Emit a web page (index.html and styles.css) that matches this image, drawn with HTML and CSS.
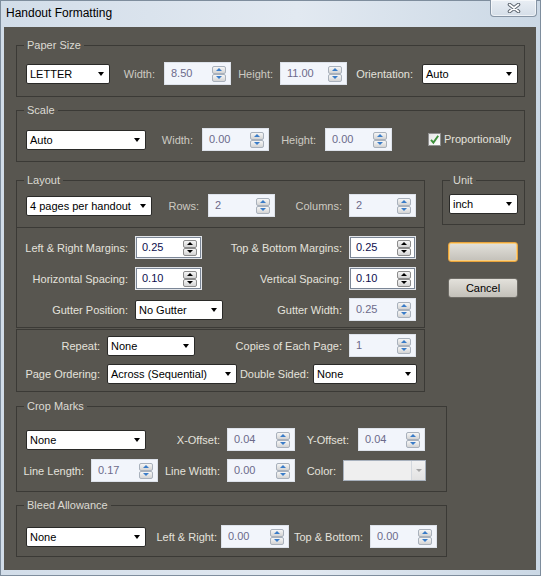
FILE: index.html
```html
<!DOCTYPE html>
<html lang="en">
<head>
  <meta charset="UTF-8">
  <title>Handout Formatting</title>
  <link rel="stylesheet" href="styles.css">
</head>
<body>

<div class="window">
  <div class="titlebar">
    <span class="title">Handout Formatting</span>
    <button class="close-btn">
      <svg width="14" height="10" viewBox="0 0 14 10">
        <path d="M2.5 1.5 L11.5 8.5 M11.5 1.5 L2.5 8.5" stroke="#5d6670" stroke-width="3.6" stroke-linecap="round" fill="none"/>
        <path d="M2.5 1.5 L11.5 8.5 M11.5 1.5 L2.5 8.5" stroke="#fff" stroke-width="1.6" stroke-linecap="round" fill="none"/>
      </svg>
    </button>
  </div>

  <div class="client">

    <!-- Paper size -->
    <div class="group paper">
      <span class="legend">Paper Size</span>
      <div class="row paper-row">
        <div class="select"><span>LETTER</span><i class="caret"></i></div>
        <span class="lbl dim wide">Width:</span>
        <div class="spin off"><span>8.50</span><span class="arrows"><i class="up"></i><i class="down"></i></span></div>
        <span class="lbl dim">Height:</span>
        <div class="spin off"><span>11.00</span><span class="arrows"><i class="up"></i><i class="down"></i></span></div>
        <span class="lbl wide">Orientation:</span>
        <div class="select"><span>Auto</span><i class="caret"></i></div>
      </div>
    </div>

    <!-- Scale -->
    <div class="group scale">
      <span class="legend">Scale</span>
      <div class="row scale-row">
        <div class="select"><span>Auto</span><i class="caret"></i></div>
        <span class="lbl dim wide">Width:</span>
        <div class="spin off"><span>0.00</span><span class="arrows"><i class="up"></i><i class="down"></i></span></div>
        <span class="lbl dim wide">Height:</span>
        <div class="spin off"><span>0.00</span><span class="arrows"><i class="up"></i><i class="down"></i></span></div>
        <span></span>
        <label class="check">
          <svg width="13" height="13" viewBox="0 0 13 13">
            <defs>
              <linearGradient id="cb" x1="0" y1="0" x2="1" y2="1">
                <stop offset="0" stop-color="#e4e4e4"/>
                <stop offset="1" stop-color="#ffffff"/>
              </linearGradient>
            </defs>
            <rect x="0.5" y="0.5" width="12" height="12" fill="url(#cb)" stroke="#8f8f8f"/>
            <path d="M3 6.8 L5.4 9.6 L10.2 2.8" stroke="#3d8f3a" stroke-width="1.9" fill="none"/>
          </svg>
          <span>Proportionally</span>
        </label>
      </div>
    </div>

    <div class="middle">
      <div class="main-col">
        <!-- Layout -->
        <div class="group layout">
          <span class="legend">Layout</span>
          <div class="row layout-row">
            <div class="select"><span>4 pages per handout</span><i class="caret"></i></div>
            <span class="lbl dim wide">Rows:</span>
            <div class="spin off"><span>2</span><span class="arrows"><i class="up"></i><i class="down"></i></span></div>
            <span class="lbl dim">Columns:</span>
            <div class="spin off"><span>2</span><span class="arrows"><i class="up"></i><i class="down"></i></span></div>
          </div>
        </div>

        <div class="panel margins">
          <span class="lbl">Left &amp; Right Margins:</span>
          <div class="spin on"><span>0.25</span><span class="arrows"><i class="up"></i><i class="down"></i></span></div>
          <span class="lbl">Top &amp; Bottom Margins:</span>
          <div class="spin on"><span>0.25</span><span class="arrows"><i class="up"></i><i class="down"></i></span></div>

          <span class="lbl">Horizontal Spacing:</span>
          <div class="spin on"><span>0.10</span><span class="arrows"><i class="up"></i><i class="down"></i></span></div>
          <span class="lbl">Vertical Spacing:</span>
          <div class="spin on"><span>0.10</span><span class="arrows"><i class="up"></i><i class="down"></i></span></div>

          <span class="lbl">Gutter Position:</span>
          <div class="select"><span>No Gutter</span><i class="caret"></i></div>
          <span class="lbl">Gutter Width:</span>
          <div class="spin off"><span>0.25</span><span class="arrows"><i class="up"></i><i class="down"></i></span></div>
        </div>

        <div class="panel repeat">
          <div class="row repeat-row1">
            <span class="lbl">Repeat:</span>
            <div class="select"><span>None</span><i class="caret"></i></div>
            <span class="lbl">Copies of Each Page:</span>
            <div class="spin off"><span>1</span><span class="arrows"><i class="up"></i><i class="down"></i></span></div>
          </div>
          <div class="row repeat-row2">
            <span class="lbl">Page Ordering:</span>
            <div class="select"><span>Across (Sequential)</span><i class="caret"></i></div>
            <span class="lbl tight">Double Sided:</span>
            <div class="select"><span>None</span><i class="caret"></i></div>
          </div>
        </div>
      </div>

      <div class="side-col">
        <div class="group unit">
          <span class="legend">Unit</span>
          <div class="select"><span>inch</span><i class="caret"></i></div>
        </div>
        <button class="btn default"></button>
        <button class="btn cancel">Cancel</button>
      </div>
    </div>

    <!-- Crop marks -->
    <div class="group crop">
      <span class="legend">Crop Marks</span>
      <div class="row crop-row1">
        <div class="select"><span>None</span><i class="caret"></i></div>
        <span class="lbl">X-Offset:</span>
        <div class="spin off"><span>0.04</span><span class="arrows"><i class="up"></i><i class="down"></i></span></div>
        <span class="lbl wide">Y-Offset:</span>
        <div class="spin off"><span>0.04</span><span class="arrows"><i class="up"></i><i class="down"></i></span></div>
      </div>
      <div class="row crop-row2">
        <span class="lbl">Line Length:</span>
        <div class="spin off"><span>0.17</span><span class="arrows"><i class="up"></i><i class="down"></i></span></div>
        <span class="lbl">Line Width:</span>
        <div class="spin off"><span>0.00</span><span class="arrows"><i class="up"></i><i class="down"></i></span></div>
        <span class="lbl">Color:</span>
        <div class="color-pick"><span class="swatch"></span><span class="drop"><i></i></span></div>
      </div>
    </div>

    <!-- Bleed -->
    <div class="group bleed">
      <span class="legend">Bleed Allowance</span>
      <div class="row bleed-row">
        <div class="select"><span>None</span><i class="caret"></i></div>
        <span class="lbl tight">Left &amp; Right:</span>
        <div class="spin off"><span>0.00</span><span class="arrows"><i class="up"></i><i class="down"></i></span></div>
        <span class="lbl">Top &amp; Bottom:</span>
        <div class="spin off"><span>0.00</span><span class="arrows"><i class="up"></i><i class="down"></i></span></div>
      </div>
    </div>

  </div>
</div>

</body>
</html>
```

FILE: styles.css
```css
* { margin: 0; padding: 0; box-sizing: border-box; }
html, body {
  width: 541px;
  height: 576px;
  background: #fff;
  font-family: "Liberation Sans", Arial, sans-serif;
  font-size: 11px;
}

/* window frame */
.window {
  width: 541px;
  height: 576px;
  border: 1px solid #7e8d9d;
  padding: 0 4px 5px 3px;
  background: linear-gradient(to right, #d2dde9, #e2e9f1 55%, #cbd8e5);
  display: flex;
  flex-direction: column;
}
.titlebar {
  height: 26px;
  display: flex;
  justify-content: space-between;
  align-items: flex-start;
}
.title {
  font-size: 12px;
  line-height: 16px;
  padding: 4px 0 0 2px;
  color: #000;
}
.close-btn {
  width: 47px;
  height: 17px;
  margin: -1px -1px 0 0;
  border: 1px solid #8795a5;
  border-top: none;
  border-radius: 0 0 4px 4px;
  background: linear-gradient(#e9eef4, #d5dee8);
  box-shadow: inset 0 0 0 1px rgba(255,255,255,0.6);
  display: flex;
  align-items: center;
  justify-content: center;
}

.client {
  flex: 1;
  background: #585650;
  padding: 18px 0 0 12px;
  color: #e2e0da;
}

/* group boxes */
.group {
  position: relative;
  border: 1px solid #3b3a36;
}
.legend {
  position: absolute;
  top: -7px;
  left: 7px;
  padding: 0 3px;
  line-height: 13px;
  background: #585650;
  color: #dcdad3;
}
.paper { width: 509px; height: 52px; padding: 16px 0 0 9px; }
.scale { width: 509px; height: 52px; padding: 17px 0 0 9px; margin-top: 13px; }

.middle { display: flex; margin-top: 18px; }
.main-col { width: 409px; }
.layout { height: 47px; border-bottom: none; padding: 13px 0 0 9px; }
.side-col { width: 83px; margin-left: 17px; display: flex; flex-direction: column; }
.unit { height: 45px; padding: 13px 0 0 6px; }
.unit .select { width: 69px; }

.panel { border: 1px solid #3b3a36; }
.margins {
  height: 101px;
  padding-top: 8px;
  display: grid;
  grid-template-columns: 118px 88px 126px 67px;
  grid-auto-rows: 23px;
  row-gap: 8px;
  align-items: center;
}
.margins .spin { width: 67px; }
.repeat {
  height: 63px;
  margin-top: 1px;
  padding-top: 4px;
  display: flex;
  flex-direction: column;
  gap: 7px;
}
.repeat .row { height: 22px; }
.repeat-row1 { grid-template-columns: 90px 88px 154px 67px; }
.repeat-row2 { grid-template-columns: 90px 130px 76px 104px; }

.crop { width: 431px; height: 86px; margin-top: 14px; padding-top: 21px; }
.crop-row1 { grid-template-columns: 120px 81px 68px 63px 67px; margin-left: 9px; }
.crop-row2 { grid-template-columns: 74px 67px 69px 68px 48px 83px; margin-top: 8px; }
.bleed { width: 431px; height: 52px; margin-top: 13px; padding: 19px 0 0 9px; }
.bleed-row { grid-template-columns: 120px 75px 68px 81px 67px; }

/* rows */
.row {
  display: grid;
  align-items: center;
  height: 23px;
}
.paper-row { grid-template-columns: 84px 54px 67px 49px 67px 75px 96px; }
.scale-row { grid-template-columns: 120px 56px 67px 56px 67px 36px auto; }
.layout-row { grid-template-columns: 126px 56px 67px 74px 67px; }

.lbl {
  text-align: right;
  padding-right: 7px;
  white-space: nowrap;
  color: #e4e2dc;
}
.lbl.wide { padding-right: 9px; }
.lbl.tight { padding-right: 4px; }
.lbl.dim { color: #cdcac2; }

/* dropdown */
.select {
  height: 20px;
  background: #fff;
  border: 1px solid #2a2a28;
  border-radius: 2px;
  display: flex;
  align-items: center;
  justify-content: space-between;
  padding: 0 5px 0 3px;
  color: #000;
  white-space: nowrap;
}
.caret {
  width: 0;
  height: 0;
  border-left: 3.5px solid transparent;
  border-right: 3.5px solid transparent;
  border-top: 4px solid #000;
}

/* numeric spinner */
.spin {
  height: 23px;
  display: flex;
  align-items: center;
  justify-content: space-between;
  padding: 0 4px 0 6px;
}
.spin span:first-child { margin-top: -2px; }
.spin.on {
  background: #fff;
  border: 1px solid #e2e5ea;
  box-shadow: inset 0 0 0 1px #7b8696;
  color: #0e0e4e;
}
.spin.off {
  background: #f2f5fb;
  border: 1px solid #dde2ea;
  color: #6c6a8a;
}
.arrows {
  width: 14px;
  height: 16px;
  display: flex;
  flex-direction: column;
}
.arrows i {
  flex: 1;
  position: relative;
  border: 1px solid #8c8c8c;
  border-radius: 2px;
  background: linear-gradient(#f6f6f6, #d4d4d4);
}
.spin.off .arrows i { border-color: #a9b1bc; }
.arrows i::after {
  content: "";
  position: absolute;
  left: 50%;
  top: 50%;
  margin: -2px 0 0 -3px;
  border-left: 3px solid transparent;
  border-right: 3px solid transparent;
}
.arrows .up::after { border-bottom: 3px solid #000; }
.arrows .down::after { border-top: 3px solid #000; }
.spin.off .arrows .up::after { border-bottom-color: #3a7cc8; }
.spin.off .arrows .down::after { border-top-color: #3a7cc8; }

/* checkbox */
.check {
  display: flex;
  align-items: center;
  gap: 3px;
  color: #e4e2dc;
  margin-top: -1px;
}

/* disabled colour picker */
.color-pick {
  height: 21px;
  display: flex;
  border: 1px solid #a8b1bd;
  background: #efefef;
}
.color-pick .swatch { flex: 1; }
.color-pick .drop {
  width: 14px;
  border-left: 1px solid #d3d8de;
  background: linear-gradient(#f2f2f2, #e2e2e2);
  display: flex;
  align-items: center;
  justify-content: center;
}
.color-pick .drop i {
  border-left: 3px solid transparent;
  border-right: 3px solid transparent;
  border-top: 3px solid #a5a5a5;
}

/* buttons */
.btn {
  width: 70px;
  height: 20px;
  margin-left: 6px;
  border: 1px solid #6e6c66;
  border-radius: 3px;
  background: linear-gradient(#e3e1db, #c3c0b9);
  font-family: inherit;
  font-size: 11px;
  color: #000;
}
.btn.default {
  margin-top: 17px;
  border-color: #e9a33a;
  box-shadow: inset 0 0 0 1px #f6cf83;
}
.btn.cancel { margin-top: 16px; }
```
